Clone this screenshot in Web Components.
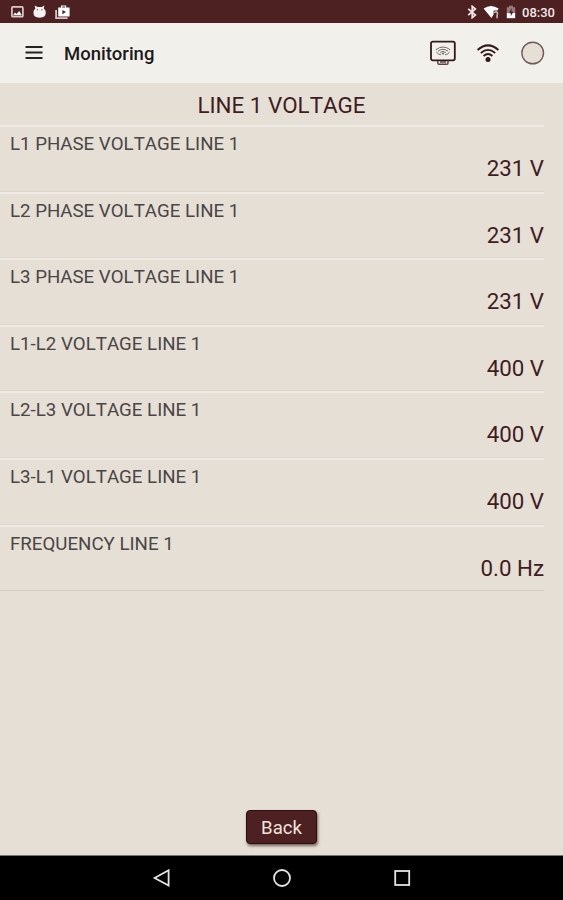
<!DOCTYPE html>
<html lang="en">
<head>
<meta charset="utf-8">
<title>Monitoring</title>
<style>
  html, body { height: 100%; margin: 0; }
  body {
    --maroon: #4d2022;
    --ink: #3f1d1f;
    --sand: #e6dfd5;
    --bar: #f2f0eb;
    font-family: Roboto, "Liberation Sans", sans-serif;
    font-kerning: none;
    background: var(--sand);
    overflow: hidden;
  }
</style>
</head>
<body>

<monitor-app>
  <status-bar slot="top" time="08:30"></status-bar>
  <app-bar slot="top">Monitoring</app-bar>

  <value-list heading="LINE 1 VOLTAGE">
    <value-row label="L1 PHASE VOLTAGE LINE 1">231 V</value-row>
    <value-row label="L2 PHASE VOLTAGE LINE 1">231 V</value-row>
    <value-row label="L3 PHASE VOLTAGE LINE 1">231 V</value-row>
    <value-row label="L1-L2 VOLTAGE LINE 1">400 V</value-row>
    <value-row label="L2-L3 VOLTAGE LINE 1">400 V</value-row>
    <value-row label="L3-L1 VOLTAGE LINE 1">400 V</value-row>
    <value-row label="FREQUENCY LINE 1">0.0 Hz</value-row>
  </value-list>

  <push-button slot="action">Back</push-button>
  <nav-bar slot="bottom"></nav-bar>
</monitor-app>

<script>
// Base class: attaches the shadow root and renders once
class BaseElement extends HTMLElement {
  constructor() {
    super();
    this.attachShadow({ mode: "open" });
  }

  connectedCallback() {
    this.shadowRoot.innerHTML = this.template();
  }
}

// <monitor-app>: page frame
class MonitorApp extends BaseElement {
  template() {
    return /* html */`
      <style>
        :host { display: flex; flex-direction: column; height: 900px; background: var(--sand); }
        main { flex: 1; }
        .action { display: flex; justify-content: center; padding-bottom: 11px; }
      </style>
      <slot name="top"></slot>
      <main><slot></slot></main>
      <div class="action"><slot name="action"></slot></div>
      <slot name="bottom"></slot>
    `;
  }
}

// <status-bar time="...">: system notifications and clock
class StatusBar extends BaseElement {
  template() {
    return /* html */`
      <style>
        :host {
          display: flex; align-items: center; justify-content: space-between;
          box-sizing: border-box; height: 23px; padding: 1px 7px 0 10px;
          background: var(--maroon); color: #f1e9e7;
        }
        .left, .right { display: flex; align-items: center; }
        .left { gap: 8px; }
        svg { display: block; }
        .bt { margin-right: 6px; }
        .wifi { margin-right: 6px; }
        .battery { margin-right: 6px; }
        time { font-size: 13px; font-weight: 500; line-height: 23px; width: 34px; }
      </style>
      <div class="left">
        <svg width="14" height="14" viewBox="0 0 14 14">
          <rect x="1.9" y="1.9" width="11" height="9.8" rx="1" fill="none" stroke="#d9cac9" stroke-width="1.7"/>
          <path d="M3 10.3 L5 7.6 L6.6 9 L9.2 6 L11.8 10.3Z" fill="#fff"/>
        </svg>
        <svg width="15" height="14" viewBox="0 0 15 14">
          <path d="M3.4 3.4 L2.6 .4 L5.6 2 H9.8 L12.4 .4 L11.8 3.4 Q13.8 5 13.8 7.6 Q13.8 12.8 7.6 12.8 Q1.4 12.8 1.4 7.6 Q1.4 5 3.4 3.4Z" fill="#f7f2f1"/>
          <circle cx="5.4" cy="4.8" r=".7" fill="#866"/><circle cx="9.9" cy="4.8" r=".7" fill="#866"/>
        </svg>
        <svg width="16" height="15" viewBox="0 0 16 15">
          <path d="M1.1 5 V13.2 H12.6" fill="none" stroke="#d5c5c4" stroke-width="1.8"/>
          <path fill-rule="evenodd" d="M3.2 2.6 H6 V.4 H11.2 V2.6 H14.6 V11.6 H3.2Z M7.2 1.6 V2.6 H10 V1.6Z" fill="#fff"/>
          <path d="M7.4 4.9 L11 7 L7.4 9.3Z" fill="#4d2022"/>
        </svg>
      </div>
      <div class="right">
        <svg class="bt" width="10" height="14" viewBox="0 0 10 14">
          <path d="M1.2 3.8 L8.4 10 L5.2 12.7 V1.3 L8.4 4 L1.2 10.2" fill="none" stroke="#efe5e4" stroke-width="1.7"/>
        </svg>
        <svg class="wifi" width="17" height="14" viewBox="0 0 17 14">
          <path d="M.6 3.6 Q8 -1.4 15.6 3.6 L14.4 5.6 H10.6 V9.6 L8.4 12.9Z" fill="#fff"/>
          <path d="M11.4 8 Q11.6 6.7 13 6.7 Q14.6 6.8 14.4 8.4 L13.9 13.4" fill="none" stroke="#c8b3b2" stroke-width="1.6"/>
        </svg>
        <svg class="battery" width="10" height="14" viewBox="0 0 10 14">
          <path d="M.8 2.2 H3 V.8 H7 V2.2 H9.2 V8 H.8Z" fill="#967a7a"/>
          <path d="M.8 8 H9.2 V13.2 H.8Z" fill="#fff"/>
          <path d="M5.6 3 L3 8.2 H4.8 V11.2 L7.4 6.8 H5.6Z" fill="#4d2022"/>
        </svg>
        <time>${this.getAttribute("time")}</time>
      </div>
    `;
  }
}

// <app-bar>: menu, title and connection icons
class AppBar extends BaseElement {
  template() {
    return /* html */`
      <style>
        :host {
          display: flex; align-items: center;
          box-sizing: border-box; height: 60px; padding: 0 17px 0 25px;
          background: var(--bar); color: #1c1a1a;
        }
        svg { display: block; }
        h1 { flex: 1; margin: 2px 0 0 21px; font-size: 18.5px; font-weight: 500; line-height: 24px; }
        .icons { display: flex; align-items: center; }
        .panel { margin-right: 19px; }
        .signal { margin-right: 20px; }
      </style>
      <svg width="18" height="16" viewBox="0 0 18 16">
        <path d="M.5 2 H17.5 M.5 7.5 H17.5 M.5 13 H17.5" stroke="#252222" stroke-width="1.8"/>
      </svg>
      <h1><slot></slot></h1>
      <div class="icons">
        <svg class="panel" width="28" height="26" viewBox="0 0 28 26">
          <rect x="2" y="1.6" width="23.8" height="18.8" rx="1.8" fill="none" stroke="#33191b" stroke-width="1.8"/>
          <path d="M8.8 21 V22.9 Q8.8 24.2 10 24.2 H17.8 Q19 24.2 19 22.9 V21 M11 22 H17" fill="none" stroke="#5c4545" stroke-width="1.5"/>
          <g fill="none" stroke="#756664" stroke-width="1">
            <path d="M6.8 9.8 Q14 4.2 21.2 9.8"/>
            <path d="M9 11.2 Q14 7.4 19 11.2"/>
            <path d="M11.2 12.5 Q14 10.3 16.8 12.5"/>
            <path d="M7.4 12 Q9 14.4 12 14.8 M20.6 12 Q19 14.4 16 14.8"/>
          </g>
          <circle cx="14" cy="13.6" r="1.1" fill="#756664"/>
        </svg>
        <svg class="signal" width="24" height="22" viewBox="0 0 24 22">
          <g fill="none" stroke="#33191b">
            <path d="M1.6 7.9 Q12 -1.2 22.4 7.9" stroke-width="2"/>
            <path d="M4.8 11 Q12 4.6 19.2 11" stroke-width="1.7"/>
            <path d="M7.6 14 Q12 9.9 16.4 14" stroke-width="1.8"/>
          </g>
          <circle cx="12" cy="17.4" r="2.5" fill="#33191b"/>
        </svg>
        <svg width="26" height="26" viewBox="0 0 26 26">
          <circle cx="12.7" cy="13" r="10.8" fill="#e6dfd5" stroke="#6e5b59" stroke-width="1.4"/>
        </svg>
      </div>
    `;
  }
}

// <value-list heading="...">: heading followed by rows
class ValueList extends BaseElement {
  template() {
    return /* html */`
      <style>
        :host { display: block; }
        h2 {
          box-sizing: border-box; height: 42px; margin: 0; padding-top: 9px;
          color: var(--ink); font-size: 22.4px; font-weight: 400; line-height: 26px; text-align: center;
        }
        .rows { margin-right: 19px; border-bottom: 1px solid #d3cec6; }
      </style>
      <h2>${this.getAttribute("heading")}</h2>
      <div class="rows"><slot></slot></div>
    `;
  }
}

// <value-row label="...">: label on the left, reading below on the right
class ValueRow extends BaseElement {
  template() {
    return /* html */`
      <style>
        :host {
          display: flex; flex-direction: column;
          box-sizing: border-box; height: 66.6px; padding: 6px 0 0 10px;
          border-top: 2px solid #efeae3;
        }
        :host(:not(:first-child)) { box-shadow: 0 -1px #dcd5cc; }
        :host(:last-child) { height: 65.4px; }
        .label { color: #4a4646; font-size: 18.7px; line-height: 22px; }
        .value { color: var(--ink); font-size: 22.3px; line-height: 26px; text-align: right; }
      </style>
      <span class="label">${this.getAttribute("label")}</span>
      <span class="value"><slot></slot></span>
    `;
  }
}

// <push-button>
class PushButton extends BaseElement {
  template() {
    return /* html */`
      <style>
        :host { display: block; }
        button {
          display: block; box-sizing: border-box; width: 71px; height: 34px; padding: 1px 0 0;
          border: 1px solid #2c0d10; border-radius: 4px;
          background: var(--maroon); color: #efe5dc;
          font: 400 18.6px/32px Roboto, "Liberation Sans", sans-serif;
          box-shadow: 1px 2px 3px rgba(40, 20, 15, .6);
        }
      </style>
      <button><slot></slot></button>
    `;
  }
}

// <nav-bar>: back, home, recents
class NavBar extends BaseElement {
  template() {
    return /* html */`
      <style>
        :host {
          display: flex; justify-content: center; align-items: center; gap: 100px;
          box-sizing: border-box; height: 45px; border-top: 1px solid #77736c; background: #000;
        }
        svg { display: block; fill: none; stroke: #e4e4e4; stroke-width: 1.8; }
      </style>
      <svg width="20" height="20" viewBox="0 0 20 20"><path d="M2.6 10 L16.6 2.2 V17.6Z"/></svg>
      <svg width="20" height="20" viewBox="0 0 20 20"><circle cx="10" cy="10" r="8"/></svg>
      <svg width="20" height="20" viewBox="0 0 20 20"><rect x="3.2" y="3" width="14" height="14"/></svg>
    `;
  }
}

customElements.define("monitor-app", MonitorApp);
customElements.define("status-bar", StatusBar);
customElements.define("app-bar", AppBar);
customElements.define("value-list", ValueList);
customElements.define("value-row", ValueRow);
customElements.define("push-button", PushButton);
customElements.define("nav-bar", NavBar);
</script>
</body>
</html>
